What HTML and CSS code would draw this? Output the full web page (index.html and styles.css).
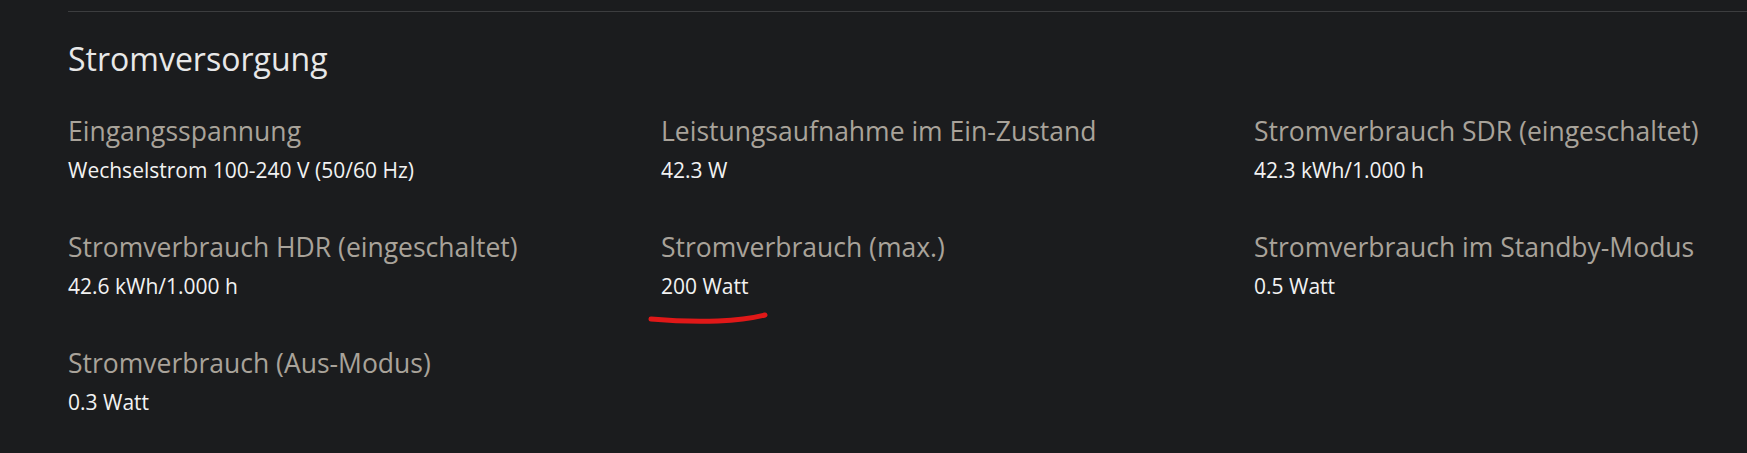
FILE: index.html
```html
<!DOCTYPE html>
<html lang="de">
<head>
    <meta charset="UTF-8">
    <meta name="viewport" content="width=device-width, initial-scale=1.0">
    <title>Stromversorgung</title>
    <link rel="stylesheet" href="styles.css">
</head>
<body>
    <section class="spec-section">
        <h2>Stromversorgung</h2>
        <div class="spec-grid">
            <div class="spec-item">
                <div class="spec-label">Eingangsspannung</div>
                <div class="spec-value">Wechselstrom 100-240 V (50/60 Hz)</div>
            </div>
            <div class="spec-item">
                <div class="spec-label">Leistungsaufnahme im Ein-Zustand</div>
                <div class="spec-value">42.3 W</div>
            </div>
            <div class="spec-item">
                <div class="spec-label">Stromverbrauch SDR (eingeschaltet)</div>
                <div class="spec-value">42.3 kWh/1.000 h</div>
            </div>
            <div class="spec-item">
                <div class="spec-label">Stromverbrauch HDR (eingeschaltet)</div>
                <div class="spec-value">42.6 kWh/1.000 h</div>
            </div>
            <div class="spec-item">
                <div class="spec-label">Stromverbrauch (max.)</div>
                <div class="spec-value marked">
                    200 Watt
                    <svg class="scribble" width="120" height="12" viewBox="0 0 120 12">
                        <path d="M3 7 C 25 9, 45 10, 70 9 S 105 6, 117 3" fill="none" stroke="#e01818" stroke-width="5" stroke-linecap="round"/>
                    </svg>
                </div>
            </div>
            <div class="spec-item">
                <div class="spec-label">Stromverbrauch im Standby-Modus</div>
                <div class="spec-value">0.5 Watt</div>
            </div>
            <div class="spec-item">
                <div class="spec-label">Stromverbrauch (Aus-Modus)</div>
                <div class="spec-value">0.3 Watt</div>
            </div>
        </div>
    </section>
</body>
</html>
```

FILE: styles.css
```css
body {
    font-family: "Open Sans", "Noto Sans", sans-serif;
    margin: 0;
    padding: 11px 0 0 68px;
    background-color: #1b1c1e;
    color: #f2f2f2;
    overflow: hidden;
}
.spec-section {
    border-top: 1px solid #3c3d3f;
}
.spec-section h2 {
    font-size: 32px;
    font-weight: 400;
    line-height: 44px;
    margin: 25px 0 34px;
    color: #e8e8e8;
}
.spec-grid {
    display: grid;
    grid-template-columns: repeat(3, 593px);
    row-gap: 47px;
}
.spec-label {
    font-size: 26.5px;
    line-height: 32px;
    color: #a9a39a;
    white-space: nowrap;
}
.spec-value {
    font-size: 21px;
    line-height: 28px;
    margin-top: 9px;
    color: #f2f2f2;
}
.marked {
    position: relative;
}
.scribble {
    position: absolute;
    left: -13px;
    top: 40px;
}
```
